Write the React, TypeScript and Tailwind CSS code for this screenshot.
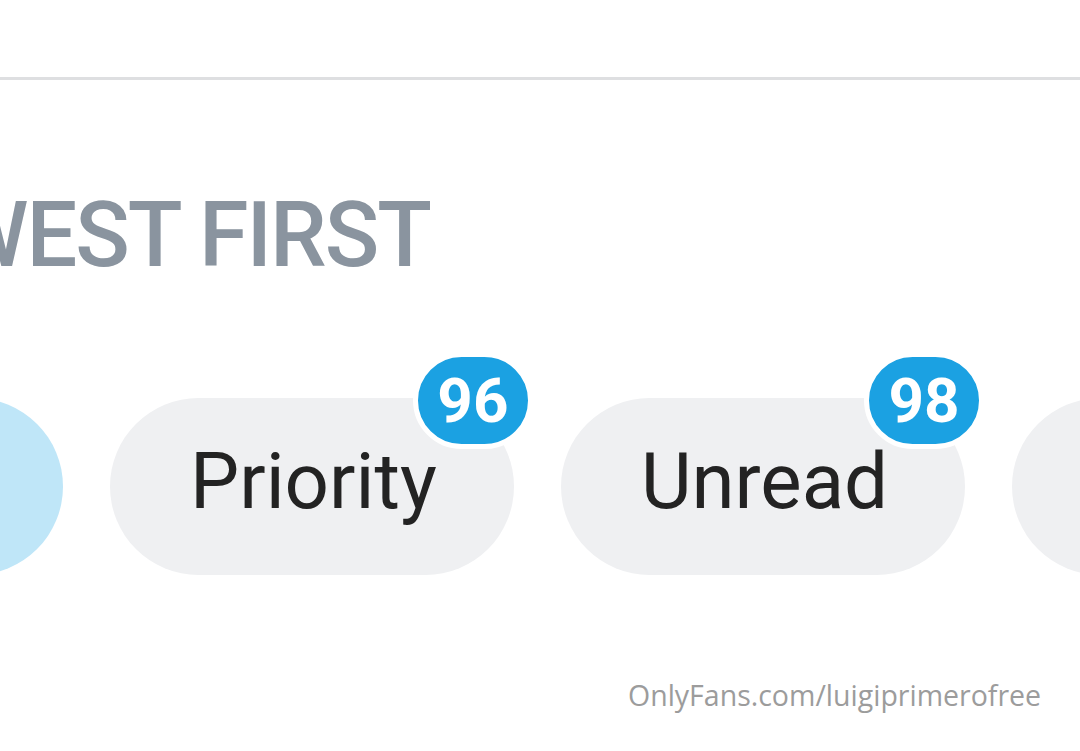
const filters = [
  { label: 'Priority', count: 96 },
  { label: 'Unread', count: 98 },
]

function Badge({ count }: { count: number }) {
  return (
    <span className="absolute -top-[46px] -right-[19px] w-[120px] h-[97px] rounded-full border-[5px] border-white bg-[#1ba1e2] flex items-center justify-center text-white font-bold text-[62px] leading-none font-['Roboto',sans-serif]">
      {count}
    </span>
  )
}

export default function App() {
  return (
    <div className="relative w-[1080px] h-[751px] overflow-hidden bg-white font-['Roboto',sans-serif]">
      {/* top bar */}
      <div className="h-[77px] bg-white" />
      <div className="h-[3px] bg-[#dedfe1]" />

      {/* sort heading */}
      <div className="mt-[111px] w-[430px] flex justify-end overflow-hidden">
        <h2 className="whitespace-nowrap text-[90px] leading-none font-medium text-[#8a949f] tracking-[-2px]">
          NEWEST FIRST
        </h2>
      </div>

      {/* filter pills */}
      <div className="mt-[117px] ml-[-114px] flex items-center gap-[47px] whitespace-nowrap">
        <div className="w-[177px] h-[177px] rounded-full bg-[#bfe6f8] shrink-0" />
        {filters.map(f => (
          <div key={f.label} className="relative shrink-0 h-[177px] rounded-full bg-[#eff0f2] pl-[80px] pr-[77px] flex items-center pb-[10px]">
            <span className="text-[78px] leading-none text-[#232323]">{f.label}</span>
            <Badge count={f.count} />
          </div>
        ))}
        <div className="w-[300px] h-[177px] rounded-full bg-[#eff0f2] shrink-0" />
      </div>

      {/* watermark */}
      <span className="absolute left-[628px] top-[681px] text-[28.5px] leading-none text-[#9c9c9c] font-['Open_Sans',sans-serif]">
        OnlyFans.com/luigiprimerofree
      </span>
    </div>
  )
}
